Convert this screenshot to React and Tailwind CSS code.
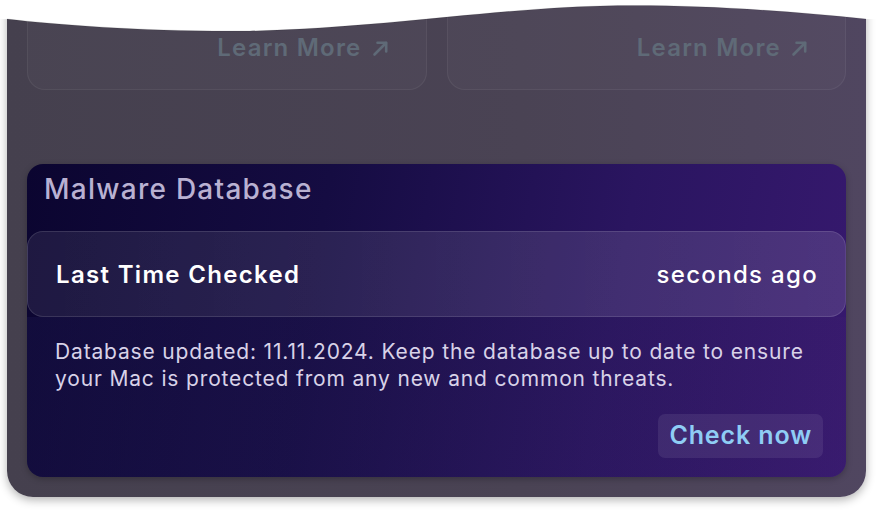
import React from "react"

/* Thin diagonal arrow used next to "Learn More" */
function ArrowIcon() {
  return (
    <svg width="17" height="17" viewBox="0 0 17 17" fill="none" stroke="currentColor" strokeWidth="2.6" strokeLinecap="round" strokeLinejoin="round">
      <path d="M2.5 14.5 L14 3" />
      <path d="M5.5 2.8 H14.2 V11.5" />
    </svg>
  )
}

/* Top cards, cut by the torn edge */
function LearnCard() {
  return (
    <div className="h-[90px] rounded-b-[18px] border border-t-0 border-white/[0.06] bg-white/[0.025] flex items-start justify-end pr-[37px] pt-[33px]">
      <span className="flex items-center gap-[10px] text-[24px] leading-[30px] font-semibold tracking-[0.05em] text-[#5f6a77]">
        Learn More
        <ArrowIcon />
      </span>
    </div>
  )
}

export default function App() {
  return (
    <div className="relative w-[880px] h-[512px] bg-white overflow-hidden font-['Inter',sans-serif]">
      {/* Window panel */}
      <div className="ml-[7px] w-[859px] h-[497px] rounded-b-[26px] bg-[linear-gradient(90deg,#45404e_0%,#4a4354_60%,#504660_100%)] shadow-[0_3px_10px_rgba(0,0,0,0.3)] px-5">
        <div className="grid grid-cols-2 gap-5">
          <LearnCard />
          <LearnCard />
        </div>

        {/* Malware Database card */}
        <div className="mt-[74px] h-[313px] rounded-[16px] overflow-hidden bg-[linear-gradient(100deg,#0b0530_0%,#150c42_35%,#2a1560_70%,#37196f_100%)] shadow-[0_2px_6px_rgba(0,0,0,0.25)] flex flex-col">
          <div className="pl-[17px] pt-[7px] h-[67px] text-[28px] leading-[36px] font-medium tracking-[0.045em] text-[#b9b1d2]">
            Malware Database
          </div>
          <div className="h-[86px] rounded-[16px] border border-white/[0.12] bg-[linear-gradient(90deg,rgba(255,255,255,0.08),rgba(255,255,255,0.12))] flex items-center justify-between pl-[28px] pr-[27px] pt-[2px]">
            <span className="text-[24px] font-semibold tracking-[0.055em] text-white">Last Time Checked</span>
            <span className="text-[24px] font-medium tracking-[0.055em] text-white">seconds ago</span>
          </div>
          <div className="flex-1 bg-[linear-gradient(90deg,rgba(30,25,80,0.35),rgba(70,40,110,0.15))] px-[28px] pt-[21px] flex flex-col">
            <p className="text-[21px] leading-[27px] tracking-[0.04em] text-[#d8d2e8]">
              Database updated: 11.11.2024. Keep the database up to date to ensure your Mac is protected from any new and common threats.
            </p>
            <div className="flex justify-end mt-[22px] -mr-[5px]">
              <button className="h-[44px] px-[11px] rounded-[7px] bg-white/[0.08] text-[25px] font-semibold tracking-[0.035em] text-[#8fcdf5]">
                Check now
              </button>
            </div>
          </div>
        </div>
      </div>

      {/* Torn top edge */}
      <svg className="absolute left-0 top-0" width="880" height="40" viewBox="0 0 880 40">
        <path
          d="M0 0 H880 V19 H866 C770 9 680 4 600 6 C490 9 380 28 250 31 C150 32 60 25 7 19 H0 Z"
          fill="#ffffff"
        />
        <path
          d="M866 19 C770 9 680 4 600 6 C490 9 380 28 250 31 C150 32 60 25 7 19"
          fill="none"
          stroke="rgba(0,0,0,0.12)"
          strokeWidth="1"
        />
      </svg>
    </div>
  )
}
